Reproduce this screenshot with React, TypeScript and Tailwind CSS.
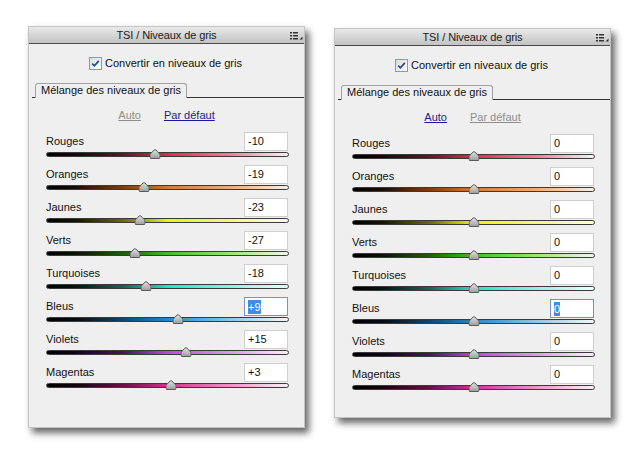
type Channel = { label: string; grad: string };

const channels: Channel[] = [
  { label: "Rouges", grad: "bg-[linear-gradient(to_right,#000_0%,#1a0508_12%,#6a1228_32%,#e8264e_50%,#f07c98_76%,#fcf0f3_100%)]" },
  { label: "Oranges", grad: "bg-[linear-gradient(to_right,#000_0%,#1a0c04_12%,#7a4018_32%,#d07a3c_50%,#e6ae80_76%,#faeee4_100%)]" },
  { label: "Jaunes", grad: "bg-[linear-gradient(to_right,#000_0%,#141400_12%,#6a6a06_32%,#f0f010_50%,#f6f680_76%,#fdfde8_100%)]" },
  { label: "Verts", grad: "bg-[linear-gradient(to_right,#000_0%,#081404_12%,#245a14_32%,#50b430_50%,#a0e080_76%,#f0fbea_100%)]" },
  { label: "Turquoises", grad: "bg-[linear-gradient(to_right,#000_0%,#041410_12%,#0e6a58_32%,#22e4c2_50%,#84f6e4_76%,#ecfffc_100%)]" },
  { label: "Bleus", grad: "bg-[linear-gradient(to_right,#000_0%,#040c14_12%,#164468_32%,#3084b8_50%,#94c4e2_76%,#f0f7fc_100%)]" },
  { label: "Violets", grad: "bg-[linear-gradient(to_right,#000_0%,#10041a_12%,#4c1268_32%,#c640e6_50%,#e494f2_76%,#fbf0fd_100%)]" },
  { label: "Magentas", grad: "bg-[linear-gradient(to_right,#000_0%,#14040e_12%,#64124a_32%,#d43092_50%,#ea94c8_76%,#fcf0f7_100%)]" },
];

const fmt = (v: number) => (v > 0 ? `+${v}` : `${v}`);

const Thumb = () => (
  <svg width="11" height="10" viewBox="0 0 11 10">
    <defs>
      <linearGradient id="th" x1="0" y1="0" x2="0" y2="1">
        <stop offset="0" stopColor="#e4e4e4" />
        <stop offset="1" stopColor="#9c9c9c" />
      </linearGradient>
    </defs>
    <path
      d="M4.6 1 Q5.5 0.3 6.4 1 L10.2 5 Q10.5 5.4 10.5 6 V8.5 Q10.5 9.5 9.5 9.5 H1.5 Q0.5 9.5 0.5 8.5 V6 Q0.5 5.4 0.8 5 Z"
      fill="url(#th)"
      stroke="#5a5a5a"
    />
  </svg>
);

const MenuIcon = () => (
  <svg width="13" height="8" viewBox="0 0 13 8">
    <rect x="0" y="0" width="2" height="1.5" fill="#333" />
    <rect x="3" y="0" width="5" height="1.5" fill="#333" />
    <rect x="0" y="3" width="2" height="1.5" fill="#333" />
    <rect x="3" y="3" width="5" height="1.5" fill="#333" />
    <rect x="0" y="6" width="2" height="1.5" fill="#333" />
    <rect x="3" y="6" width="5" height="1.5" fill="#333" />
    <path d="M12.5 4.5 V7.5 H9.5 Z" fill="#333" />
  </svg>
);

const Checkbox = () => (
  <div className="flex h-[13px] w-[13px] items-center justify-center border border-[#7f9db9] bg-gradient-to-br from-[#dcdcd6] to-[#ffffff]">
    <svg width="9" height="9" viewBox="0 0 9 9">
      <path d="M1.2 4.6 L3.4 6.8 L7.8 1.8" fill="none" stroke="#2b4b8f" strokeWidth="1.8" />
    </svg>
  </div>
);

type PanelProps = {
  values: number[];
  auto: boolean;
  className: string;
};

const Panel = ({ values, auto, className }: PanelProps) => (
  <div
    className={`flex w-[277px] flex-col border border-[#c4c4c4] bg-[#efefef] shadow-[4px_5px_7px_rgba(0,0,0,0.6)] ${className}`}
  >
    <div className="relative flex h-[17px] items-center justify-center border-b border-[#4a4a4a] bg-gradient-to-b from-[#e9e9e9] to-[#c3c3c3] text-[11px] tracking-[-0.1px] text-[#1a1a1a]">
      TSI / Niveaux de gris
      <div className="absolute right-[1px] top-[5px] flex">
        <MenuIcon />
      </div>
    </div>

    <div className="flex h-[39px] items-center justify-center gap-[3px] pr-[2px] text-[11px] text-[#111]">
      <Checkbox />
      Convertir en niveaux de gris
    </div>

    <div className="flex h-[15px] items-end">
      <div className="ml-[3px] w-[3px] border-b border-[#333]" />
      <div className="h-[15px] w-[152px] rounded-t-[3px] border border-b-0 border-[#a2a2a2] pl-[5px] text-[11px] leading-[13px] text-[#111]">
        Mélange des niveaux de gris
      </div>
      <div className="flex-1 border-b border-[#333]" />
    </div>

    <div className="flex h-[34px] items-center justify-center gap-[23px] text-[11px]">
      <span className={auto ? "text-[#1c1c9a] underline" : "text-[#8e8e8e] underline"}>Auto</span>
      <span className={auto ? "text-[#8e8e8e] underline" : "text-[#1c1c9a] underline"}>Par défaut</span>
    </div>

    <div className="flex flex-col pl-[17px] pr-[15px]">
      {channels.map((c, i) => {
        const v = values[i];
        const selected = c.label === "Bleus";
        return (
          <div key={c.label} className="flex h-[33px] flex-col">
            <div className="flex h-[19px] items-center justify-between">
              <span className="text-[11px] text-[#111]">{c.label}</span>
              <div
                className={`mr-[1px] flex h-[19px] w-[44px] items-center border bg-white pl-[3px] text-[11px] text-[#111] ${
                  selected ? "border-[#7393cc]" : "border-[#cfcfcf]"
                }`}
              >
                {selected ? (
                  <span className="bg-[#3d8ee2] leading-[14px] text-white">{fmt(v)}</span>
                ) : (
                  fmt(v)
                )}
              </div>
            </div>
            <div className="relative h-[14px]">
              <div className={`mt-[1px] h-[5px] rounded-full border border-[#3a3a3a] ${c.grad}`} />
              <div
                className="absolute top-[-2px] flex -translate-x-1/2"
                style={{ left: `${((v + 100) / 200) * 100}%` }}
              >
                <Thumb />
              </div>
            </div>
          </div>
        );
      })}
    </div>
  </div>
);

export default function App() {
  return (
    <div className="flex h-[456px] w-[638px] items-start gap-[29px] bg-white pl-[28px] pt-[26px] font-['Liberation_Sans',Arial,sans-serif]">
      <Panel values={[-10, -19, -23, -27, -18, 9, 15, 3]} auto={false} className="h-[402px]" />
      <Panel values={[0, 0, 0, 0, 0, 0, 0, 0]} auto={true} className="mt-[2px] h-[390px]" />
    </div>
  );
}
